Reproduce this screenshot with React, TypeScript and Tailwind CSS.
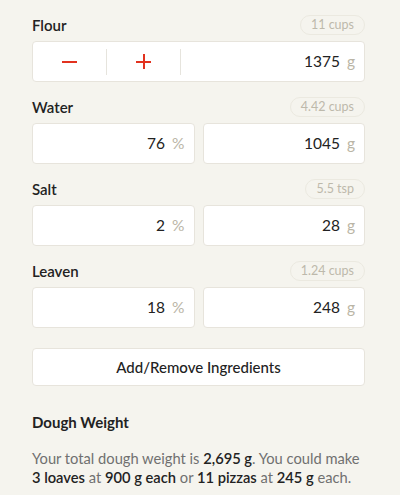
import React from "react";

const font = { fontFamily: "Lato, 'Open Sans', sans-serif" };

function Header({ label, badge }: { label: string; badge: string }) {
  return (
    <div className="flex items-center justify-between h-[20px] mb-[6px]">
      <span className="text-[15px] font-semibold text-[#222]">{label}</span>
      <span className="h-[20px] px-[10px] rounded-full border border-[#ebe9e0] text-[12.5px] text-[#bdb9ab] flex items-center">
        {badge}
      </span>
    </div>
  );
}

function Field({ value, unit }: { value: string; unit: string }) {
  return (
    <div className="flex-1 h-[41px] bg-white rounded-[4px] border border-[#e7e4dc] flex items-center justify-end pr-[9px]">
      <span className="text-[15.5px] text-[#222]">{value}</span>
      <span className="text-[15.5px] text-[#bab5a6] ml-[7px]">{unit}</span>
    </div>
  );
}

const B = ({ children }: { children: React.ReactNode }) => (
  <span className="text-[#222] font-semibold">{children}</span>
);

export default function App() {
  return (
    <div className="w-[400px] h-[495px] bg-[#f5f4ee] pl-8 pr-[35px] pt-[15px] overflow-hidden" style={font}>
      <div className="mb-[15px]">
        <Header label="Flour" badge="11 cups" />
        <div className="h-[41px] bg-white rounded-[4px] border border-[#e7e4dc] flex items-center">
          <div className="w-[73px] flex items-center justify-center">
            <div className="w-[15px] h-[2px] bg-[#e2321f]" />
          </div>
          <div className="w-px h-[26px] bg-[#e6e4dd]" />
          <div className="w-[73px] flex items-center justify-center">
            <div className="relative w-[15px] h-[15px]">
              <div className="absolute left-0 top-[6.5px] w-[15px] h-[2px] bg-[#e2321f]" />
              <div className="absolute top-0 left-[6.5px] w-[2px] h-[15px] bg-[#e2321f]" />
            </div>
          </div>
          <div className="w-px h-[26px] bg-[#e6e4dd]" />
          <div className="flex-1 flex items-center justify-end pr-[9px]">
            <span className="text-[15.5px] text-[#222]">1375</span>
            <span className="text-[15.5px] text-[#bab5a6] ml-[7px]">g</span>
          </div>
        </div>
      </div>
      {[
        ["Water", "4.42 cups", "76", "1045"],
        ["Salt", "5.5 tsp", "2", "28"],
        ["Leaven", "1.24 cups", "18", "248"],
      ].map(([l, b, p, g]) => (
        <div key={l} className="mb-[15px]">
          <Header label={l} badge={b} />
          <div className="flex gap-[8px]">
            <Field value={p} unit="%" />
            <Field value={g} unit="g" />
          </div>
        </div>
      ))}
      <div className="mt-[20px] h-[38px] bg-white rounded-[4px] border border-[#e7e4dc] flex items-center justify-center text-[15px] font-medium text-[#222]">
        Add/Remove Ingredients
      </div>
      <div className="mt-[25px] text-[15px] font-bold text-[#222]">Dough Weight</div>
      <p className="mt-[15px] text-[14.7px] leading-[19px] text-[#707070] whitespace-nowrap">
        Your total dough weight is <B>2,695 g</B>. You could make
        <br />
        <B>3 loaves</B> at <B>900 g each</B> or <B>11 pizzas</B> at <B>245 g</B> each.
      </p>
    </div>
  );
}
